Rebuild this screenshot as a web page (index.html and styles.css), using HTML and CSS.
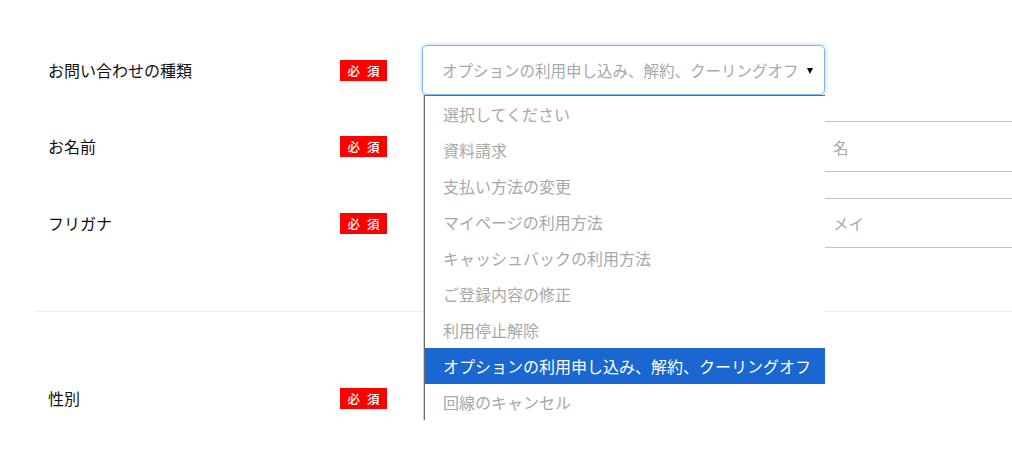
FILE: index.html
```html
<!DOCTYPE html>
<html lang="ja">
<head>
<meta charset="utf-8">
<title>お問い合わせ</title>
<link rel="stylesheet" href="styles.css">
</head>
<body>
<div class="form">
  <div class="row">
    <div class="label">お問い合わせの種類</div>
    <span class="badge">必 須</span>
    <div class="field select-wrap">
      <div class="select">
        <span class="select-text">オプションの利用申し込み、解約、クーリングオフ</span>
        <span class="arrow"></span>
      </div>
      <ul class="dropdown">
        <li>選択してください</li>
        <li>資料請求</li>
        <li>支払い方法の変更</li>
        <li>マイページの利用方法</li>
        <li>キャッシュバックの利用方法</li>
        <li>ご登録内容の修正</li>
        <li>利用停止解除</li>
        <li class="selected">オプションの利用申し込み、解約、クーリングオフ</li>
        <li>回線のキャンセル</li>
      </ul>
    </div>
  </div>
  <div class="row row-2">
    <div class="label">お名前</div>
    <span class="badge">必 須</span>
    <div class="field pair">
      <div class="input"></div>
      <div class="input">名</div>
    </div>
  </div>
  <div class="row row-3">
    <div class="label">フリガナ</div>
    <span class="badge">必 須</span>
    <div class="field pair">
      <div class="input"></div>
      <div class="input">メイ</div>
    </div>
  </div>
  <div class="divider"></div>
  <div class="row row-gender">
    <div class="label">性別</div>
    <span class="badge">必 須</span>
    <div class="field"></div>
  </div>
</div>
</body>
</html>
```
FILE: styles.css
```css
html, body {
  margin: 0;
  padding: 0;
  overflow: hidden;
  background: #fff;
}
body {
  font-family: "Noto Sans CJK JP", "Noto Sans", sans-serif;
  color: #111;
  width: 1012px;
  height: 472px;
}
.form {
  padding: 45px 0 0 35px;
}
.row {
  display: flex;
  align-items: center;
  height: 50px;
}
.row-2 { margin-top: 26px; }
.row-3 { margin-top: 27px; }
.row-gender { margin-top: 61px; }
.label {
  width: 305px;
  padding-left: 13px;
  box-sizing: border-box;
  font-size: 16px;
  flex: none;
}
.badge {
  flex: none;
  width: 47px;
  height: 21px;
  margin-right: 35px;
  margin-top: 1px;
  padding-left: 2px;
  box-sizing: border-box;
  background: #ff0000;
  color: #fff;
  font-size: 12.5px;
  line-height: 21px;
  text-align: center;
  font-weight: 500;
  letter-spacing: 2px;
}
.field {
  flex: none;
  height: 50px;
}
.select-wrap {
  position: relative;
  width: 403px;
}
.select {
  box-sizing: border-box;
  height: 50px;
  width: 403px;
  border: 1px solid #7db6ee;
  border-radius: 5px;
  box-shadow: 0 0 4px rgba(90, 160, 235, 0.55);
  display: flex;
  align-items: center;
  padding-left: 19px;
  color: #a8a8a8;
  font-size: 15.5px;
}
.select-text {
  flex: 1;
  white-space: nowrap;
}
.arrow {
  width: 0;
  height: 0;
  border-left: 3px solid transparent;
  border-right: 3px solid transparent;
  border-top: 6px solid #000;
  margin-right: 11px;
  margin-top: 1px;
}
.dropdown {
  position: absolute;
  top: 50px;
  left: 2px;
  width: 400px;
  margin: 0;
  padding: 0;
  list-style: none;
  background: #fff;
  border-top: 1px solid #6a6a6a;
  border-left: 1px solid #6a6a6a;
  box-shadow: -1px 0 0 #cfcfcf;
  z-index: 5;
}
.dropdown li {
  height: 36px;
  line-height: 36px;
  padding-left: 18px;
  font-size: 16px;
  color: #a8a8a8;
  white-space: nowrap;
}
.dropdown li.selected {
  background: #1a67d2;
  color: #fff;
}
.pair {
  display: flex;
  gap: 10px;
  padding-left: 3px;
}
.input {
  box-sizing: border-box;
  width: 378px;
  height: 51px;
  border: 1px solid #c4c4c4;
  padding-left: 19px;
  display: flex;
  align-items: center;
  font-size: 15.5px;
  color: #a8a8a8;
  flex: none;
}
.row-3 .input { height: 50px; }
.divider {
  margin-top: 63px;
  border-top: 1px solid #ececec;
}
```
